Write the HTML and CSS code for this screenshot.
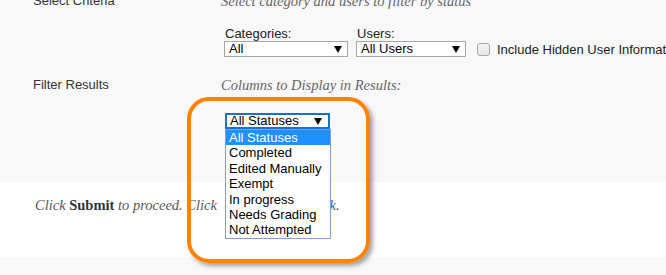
FILE: index.html
```html
<!DOCTYPE html>
<html>
<head>
<meta charset="utf-8">
<link rel="stylesheet" href="styles.css">
</head>
<body>
<div class="panel">
  <div class="row row-criteria">
    <div class="label">Select Criteria</div>
    <div class="content">
      <div class="hint">Select category and users to filter by status</div>
      <div class="controls">
        <div class="field">
          <div class="field-label">Categories:</div>
          <div class="select sel-cat"><span>All</span><span class="arrow"></span></div>
        </div>
        <div class="field">
          <div class="field-label">Users:</div>
          <div class="select sel-users"><span>All Users</span><span class="arrow"></span></div>
        </div>
        <div class="check-field">
          <span class="checkbox"></span>
          <span class="check-label">Include Hidden User Information</span>
        </div>
      </div>
    </div>
  </div>
  <div class="row row-filter">
    <div class="label">Filter Results</div>
    <div class="content">
      <div class="hint">Columns to Display in Results:</div>
      <div class="status-wrap">
        <div class="select sel-status"><span>All Statuses</span><span class="arrow"></span></div>
        <ul class="status-list">
          <li class="active">All Statuses</li>
          <li>Completed</li>
          <li>Edited Manually</li>
          <li>Exempt</li>
          <li>In progress</li>
          <li>Needs Grading</li>
          <li>Not Attempted</li>
        </ul>
      </div>
    </div>
  </div>
</div>
<div class="submit-band">
  <p class="submit-text">Click <b>Submit</b> to proceed. Click <span class="covered"><b>Cancel</b> to go bac</span>k.</p>
</div>
<div class="callout"></div>
</body>
</html>
```
FILE: styles.css
```css
* { box-sizing: border-box; }
html, body { margin: 0; padding: 0; }
body {
  background: #f8f8f8;
  font-family: "Liberation Sans", Arial, sans-serif;
  font-size: 13px;
  color: #333;
  overflow: hidden;
  position: relative;
  height: 275px;
}
.panel {
  display: flow-root;
  height: 182px;
  padding-left: 33px;
  background: #f8f8f8;
}
.row {
  display: grid;
  grid-template-columns: 188px 1fr;
}
.row-criteria { margin-top: -7px; }
.row-filter { margin-top: 20px; }
.label {
  line-height: 16px;
  color: #333;
}
.hint {
  font-family: "Liberation Serif", "Times New Roman", serif;
  font-style: italic;
  font-size: 14.5px;
  line-height: 16px;
  color: #666;
  white-space: nowrap;
}
.controls {
  display: flex;
  align-items: flex-end;
  margin-top: 17px;
  padding-left: 3px;
}
.field { margin-right: 8px; }
.field-label {
  line-height: 15px;
  color: #222;
  padding-left: 1px;
}
.select {
  display: flex;
  align-items: center;
  justify-content: space-between;
  height: 16px;
  background: #fff;
  border: 1px solid #a6a6a6;
  padding: 0 5px 0 4px;
  color: #000;
  line-height: 14px;
}
.arrow {
  width: 0;
  height: 0;
  border-left: 4px solid transparent;
  border-right: 4px solid transparent;
  border-top: 7px solid #000;
}
.sel-cat { width: 124px; }
.sel-users { width: 110px; }
.check-field {
  display: flex;
  align-items: center;
  height: 16px;
  margin-left: 3px;
  white-space: nowrap;
}
.checkbox {
  width: 13px;
  height: 13px;
  border: 1px solid #a8a8a8;
  border-radius: 3px;
  background: linear-gradient(#f4f4f4, #e6e6e6);
  margin-right: 7px;
}
.check-label { color: #222; }
.status-wrap {
  position: relative;
  margin-top: 20px;
  margin-left: 4px;
  width: 105px;
}
.sel-status {
  width: 105px;
  border: 2px solid #1a6fd1;
  padding: 0 6px 0 3px;
}
.status-list {
  position: absolute;
  top: 16px;
  left: 0;
  width: 106px;
  margin: 0;
  padding: 0;
  list-style: none;
  background: #fff;
  border: 1px solid #7f9fd6;
  color: #000;
  z-index: 2;
}
.status-list li {
  height: 15.4px;
  line-height: 15.4px;
  padding-left: 3px;
  white-space: nowrap;
}
.status-list li.active {
  background: #1e90ff;
  color: #fff;
}
.submit-band {
  background: #fff;
  height: 75px;
  padding: 15px 0 0 35px;
}
.submit-text {
  margin: 0;
  font-family: "Liberation Serif", "Times New Roman", serif;
  font-style: italic;
  font-size: 14.5px;
  line-height: 16px;
  color: #555;
  white-space: nowrap;
}
.submit-text b { font-style: normal; color: #333; }
.covered {
  display: inline-block;
  vertical-align: top;
  width: 109px;
  padding-left: 4px;
  overflow: hidden;
  white-space: nowrap;
}
.callout {
  position: absolute;
  left: 187px;
  top: 97px;
  width: 183px;
  height: 166px;
  border: 4px solid #ff8300;
  border-radius: 22px;
  box-shadow: 3px 3px 4px rgba(0,0,0,0.35);
  z-index: 3;
  pointer-events: none;
}
```
